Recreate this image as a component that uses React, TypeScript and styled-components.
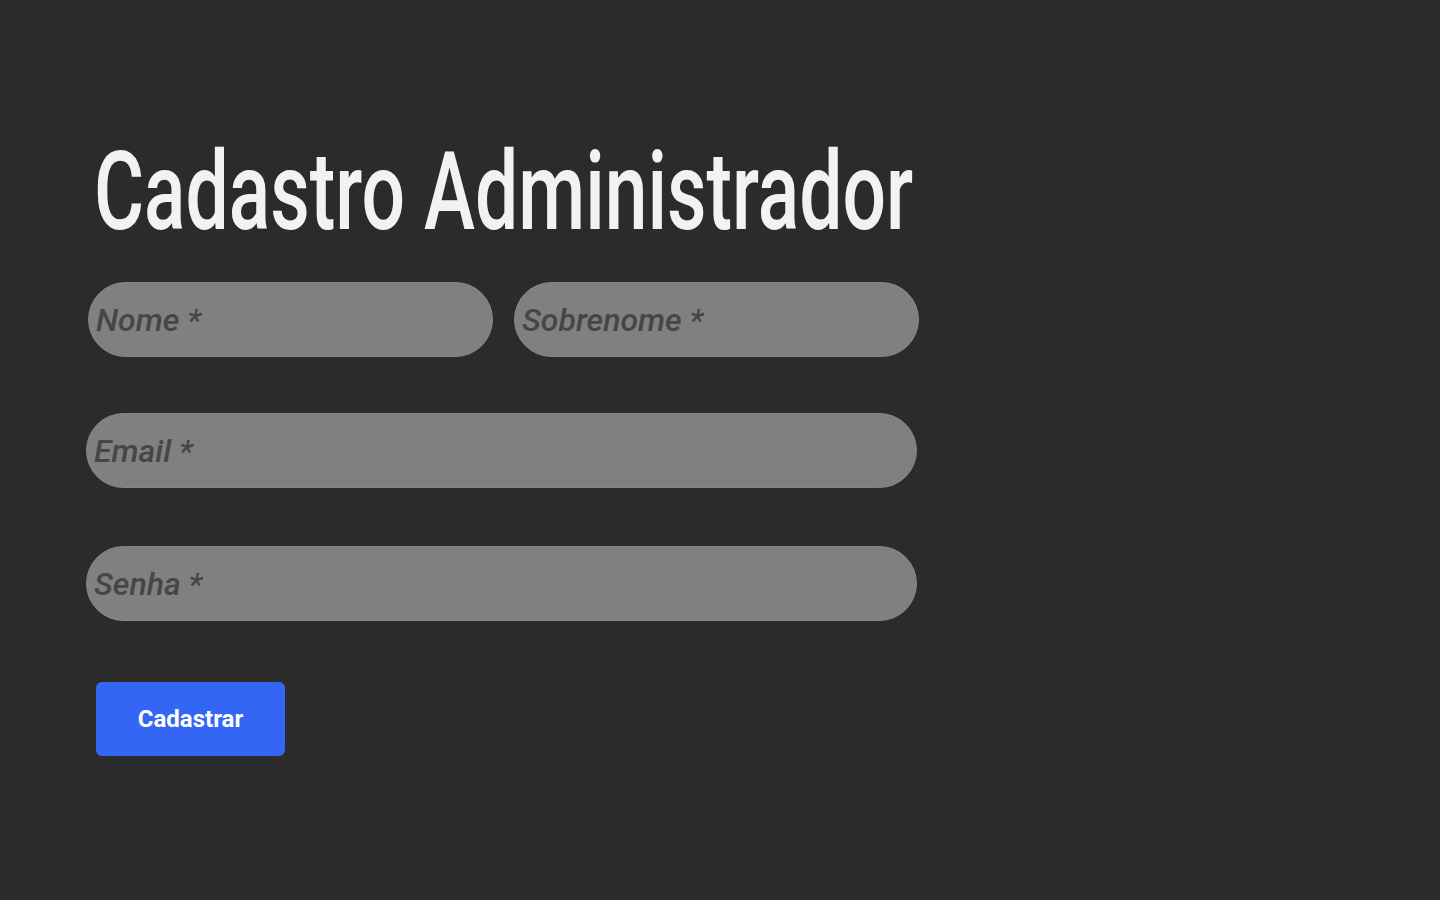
import React from "react";
import styled, { createGlobalStyle } from "styled-components";

const GlobalStyle = createGlobalStyle`
  html, body {
    margin: 0;
    padding: 0;
    background: #2b2b2b;
    height: 100%;
  }
  body {
    font-family: Roboto, "Liberation Sans", sans-serif;
  }
  * { box-sizing: border-box; }
`;

const Page = styled.main`
  min-height: 100vh;
  background: #2b2b2b;
  padding: 128px 0 0 86px;
  display: flex;
  flex-direction: column;
`;

const Title = styled.h1`
  margin: 0 0 0 8px;
  font-family: Roboto, "Liberation Sans", sans-serif;
  font-weight: 500;
  font-size: 110px;
  line-height: 128px;
  color: #f2f2f2;
  white-space: nowrap;
  transform: scaleX(0.698);
  transform-origin: left center;
  width: max-content;
`;

const Form = styled.form`
  display: flex;
  flex-direction: column;
  margin-top: 26px;
`;

const Row = styled.div<{ $shift?: number; $gap: number }>`
  display: flex;
  gap: 21px;
  width: 831px;
  margin-left: ${(p) => p.$shift ?? 0}px;
  margin-bottom: ${(p) => p.$gap}px;
`;

const Field = styled.input`
  flex: 1;
  min-width: 0;
  height: 75px;
  border: 1px solid #868686;
  border-radius: 38px;
  background: #808080;
  padding: 0 7px;
  font-family: Roboto, "Liberation Sans", sans-serif;
  font-size: 32px;
  font-weight: 500;
  color: #333;
  outline: none;
  &::placeholder {
    color: #464646;
    font-style: italic;
    font-weight: 500;
  }
`;

const Submit = styled.button`
  align-self: flex-start;
  margin-left: 10px;
  margin-top: -1px;
  width: 189px;
  height: 74px;
  border: none;
  border-radius: 6px;
  background: #3466f6;
  color: #ffffff;
  font-family: Roboto, "Liberation Sans", sans-serif;
  font-weight: 700;
  font-size: 24px;
  cursor: pointer;
`;

export default function App() {
  return (
    <>
      <GlobalStyle />
      <Page>
        <Title>Cadastro Administrador</Title>
        <Form onSubmit={(e) => e.preventDefault()}>
          <Row $shift={2} $gap={56}>
            <Field placeholder="Nome *" />
            <Field placeholder="Sobrenome *" />
          </Row>
          <Row $gap={58}>
            <Field placeholder="Email *" type="email" />
          </Row>
          <Row $gap={62}>
            <Field placeholder="Senha *" type="password" />
          </Row>
          <Submit type="submit">Cadastrar</Submit>
        </Form>
      </Page>
    </>
  );
}
